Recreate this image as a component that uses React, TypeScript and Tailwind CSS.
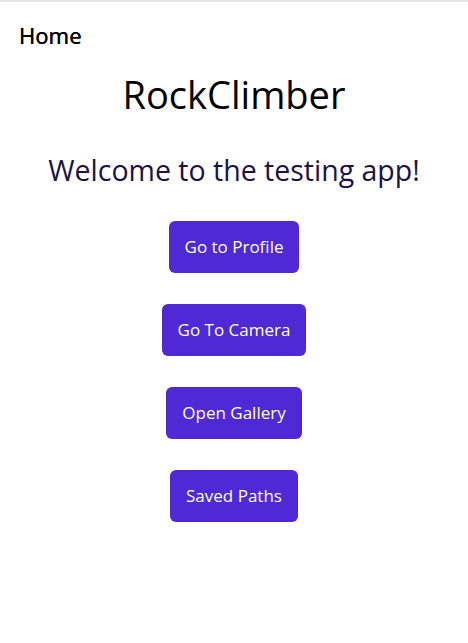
import React from "react";

const buttons = ["Go to Profile", "Go To Camera", "Open Gallery", "Saved Paths"];

export default function App() {
  return (
    <div className="min-h-screen bg-white border-t-2 border-[#e4e4e4] font-['Open_Sans',sans-serif]">
      <div className="px-[19px] pt-[18px] h-[55px]">
        <span className="text-[22px] leading-[30px] font-normal text-black font-['Noto_Sans',sans-serif] [text-shadow:0_0_0.3px_black]">
          Home
        </span>
      </div>
      <div className="flex flex-col items-center">
        <h1 className="text-[38px] leading-[52px] text-black mt-[11px]">RockClimber</h1>
        <p className="text-[28.5px] leading-[40px] text-[#1c1248] mt-[30px]">
          Welcome to the testing app!
        </p>
        <div className="flex flex-col items-center gap-[31px] mt-[31px]">
          {buttons.map((b) => (
            <button
              key={b}
              className="bg-[#5029d6] text-white text-[17px] leading-[24px] px-[16px] py-[14px] rounded-[6px]"
            >
              {b}
            </button>
          ))}
        </div>
      </div>
    </div>
  );
}
